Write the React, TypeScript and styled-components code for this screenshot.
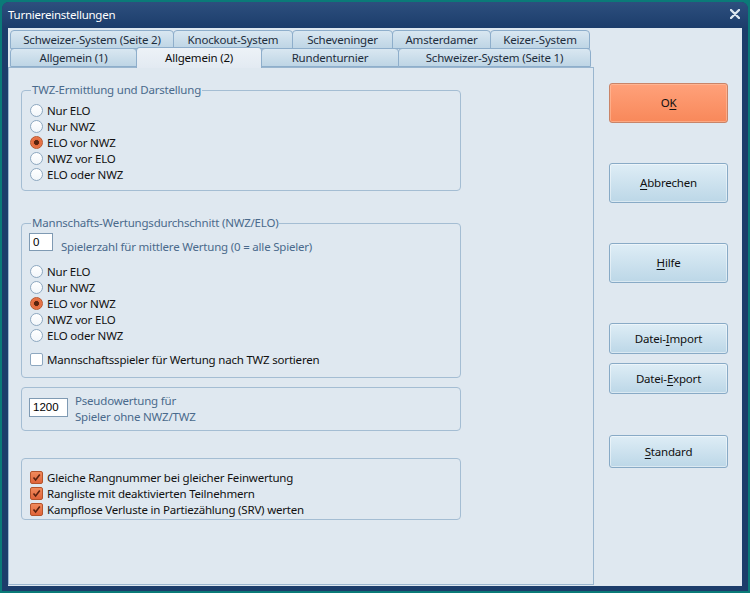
import React from "react";
import styled, { createGlobalStyle } from "styled-components";

const Global = createGlobalStyle`
  html, body { margin: 0; padding: 0; background: #0b7a78; }
  body {
    width: 750px; height: 593px; overflow: hidden;
    font-family: "Noto Sans", "Open Sans", sans-serif;
    font-size: 11.5px;
    letter-spacing: -0.2px;
  }
  * { box-sizing: border-box; }
`;

const Window = styled.div`
  margin: 2px 2px 0 2px;
  width: 746px;
  height: 589px;
  background: #1c3d6b;
  border-radius: 7px 7px 0 0;
  display: flex;
  flex-direction: column;
`;

const TitleBar = styled.div`
  height: 26px;
  display: flex;
  align-items: center;
  justify-content: space-between;
  padding: 0 8px 2px 6px;
  border-radius: 7px 7px 0 0;
  background: linear-gradient(#2d4f7e, #1c3d6b);
  color: #ffffff;
`;

const Title = styled.span`
  font-size: 11.5px;
  letter-spacing: -0.25px;
`;

const Client = styled.div`
  flex: 1;
  margin: 0 6px 5px 6px;
  background: #dfe8f0;
  display: flex;
`;

const TabArea = styled.div`
  width: 586px;
  padding-top: 3px;
  display: flex;
  flex-direction: column;
`;

const TabRow = styled.div`
  display: flex;
  height: 18px;
  margin-left: 2px;
  align-items: flex-end;
`;

const Tab = styled.div<{ $w: number; $active?: boolean }>`
  width: ${(p) => p.$w}px;
  height: ${(p) => (p.$active ? 21 : 19)}px;
  margin-bottom: ${(p) => (p.$active ? -1 : 0)}px;
  margin-right: -1px;
  position: relative;
  z-index: ${(p) => (p.$active ? 2 : 1)};
  border: 1px solid #8eaecb;
  border-bottom: ${(p) => (p.$active ? "none" : "1px solid #8eaecb")};
  border-radius: 4px 4px 0 0;
  background: ${(p) =>
    p.$active ? "linear-gradient(#edf2f7, #e3eaf2)" : "linear-gradient(#d9e7f1, #bed5e5)"};
  display: flex;
  align-items: center;
  justify-content: center;
  padding-bottom: ${(p) => (p.$active ? 2 : 0)}px;
  white-space: nowrap;
`;

const TabText = styled.span<{ $active?: boolean }>`
  color: ${(p) => (p.$active ? "#0c0c0c" : "#1e2d3c")};
`;

const Panel = styled.div`
  position: relative;
  z-index: 1;
  height: 518px;
  border: 1px solid #9ab6cf;
  background: #dfe8f0;
  padding: 0 0 0 12px;
  display: flex;
  flex-direction: column;
`;

const Group = styled.div<{ $mt: number; $h: number; $pt: number }>`
  position: relative;
  width: 440px;
  height: ${(p) => p.$h}px;
  margin-top: ${(p) => p.$mt}px;
  border: 1px solid #a4bdd3;
  border-radius: 4px;
  padding: ${(p) => p.$pt}px 0 0 7px;
  display: flex;
  flex-direction: column;
  flex-shrink: 0;
`;

const Legend = styled.span`
  position: absolute;
  top: -9px;
  left: 9px;
  padding: 0 1px;
  background: #dfe8f0;
  color: #4a6a8c;
  line-height: 16px;
`;

const OptRow = styled.label`
  height: 16px;
  display: flex;
  align-items: center;
  gap: 4px;
  color: #111111;
  white-space: nowrap;
  flex-shrink: 0;
`;

const Radio = styled.span<{ $on?: boolean }>`
  width: 13px;
  height: 13px;
  margin-left: 1px;
  border-radius: 50%;
  border: 1px solid ${(p) => (p.$on ? "#b8552c" : "#8ea8c0")};
  background: ${(p) =>
    p.$on
      ? "radial-gradient(circle, #5a2410 0 2.2px, #e2683c 2.8px, #f0875a 100%)"
      : "linear-gradient(#ffffff, #f2f6fa)"};
  flex-shrink: 0;
`;

const Check = styled.span<{ $on?: boolean }>`
  width: 13px;
  height: 13px;
  margin-left: 1px;
  border-radius: 2px;
  border: 1px solid ${(p) => (p.$on ? "#b4532b" : "#8ea8c0")};
  background: ${(p) => (p.$on ? "linear-gradient(#f08a5c, #e0643a)" : "#ffffff")};
  display: flex;
  align-items: center;
  justify-content: center;
  flex-shrink: 0;
`;

const Input = styled.div<{ $w: number; $h: number; $mt?: number }>`
  width: ${(p) => p.$w}px;
  height: ${(p) => p.$h}px;
  margin-top: ${(p) => p.$mt ?? 0}px;
  border: 1px solid #7f9ab3;
  background: #ffffff;
  color: #000000;
  font-family: "Liberation Sans", Arial, sans-serif;
  font-size: 11.5px;
  letter-spacing: 0;
  padding: 1px 0 0 3px;
  line-height: 14px;
  flex-shrink: 0;
`;

const InlineRow = styled.div<{ $gap: number; $h: number }>`
  display: flex;
  align-items: flex-start;
  gap: ${(p) => p.$gap}px;
  height: ${(p) => p.$h}px;
  flex-shrink: 0;
`;

const Hint = styled.div<{ $mt: number }>`
  color: #4a6a8c;
  margin-top: ${(p) => p.$mt}px;
  line-height: 16px;
  white-space: nowrap;
`;

const Spacer = styled.div<{ $h: number }>`
  height: ${(p) => p.$h}px;
  flex-shrink: 0;
`;

const ButtonColumn = styled.div`
  flex: 1;
  padding: 55px 0 0 15px;
  display: flex;
  flex-direction: column;
  align-items: flex-start;
`;

const Button = styled.div<{ $h: number; $mt: number; $primary?: boolean }>`
  width: 119px;
  height: ${(p) => p.$h}px;
  margin-top: ${(p) => p.$mt}px;
  border: 1px solid ${(p) => (p.$primary ? "#c98468" : "#88aac6")};
  border-radius: 3px;
  background: ${(p) =>
    p.$primary ? "linear-gradient(#ffa17a, #f8885a)" : "linear-gradient(#deedf6, #bcd7e7)"};
  box-shadow: inset 0 0 0 1px ${(p) => (p.$primary ? "rgba(255,200,170,0.5)" : "rgba(255,255,255,0.45)")};
  color: #101010;
  display: flex;
  align-items: center;
  justify-content: center;
  padding-bottom: 1px;
  & u { text-underline-offset: 2px; }
`;

const radioOpts = ["Nur ELO", "Nur NWZ", "ELO vor NWZ", "NWZ vor ELO", "ELO oder NWZ"];

const CheckMark = () => (
  <svg width="9" height="9" viewBox="0 0 9 9">
    <path d="M1.5 4.5 L3.6 7 L7.8 1.5" fill="none" stroke="#5a2210" strokeWidth="1.6" />
  </svg>
);

const RadioList = () => (
  <>
    {radioOpts.map((o, i) => (
      <OptRow key={o}>
        <Radio $on={i === 2} />
        {o}
      </OptRow>
    ))}
  </>
);

export default function App() {
  return (
    <>
      <Global />
      <Window>
        <TitleBar>
          <Title>Turniereinstellungen</Title>
          <svg width="10" height="10" viewBox="0 0 10 10">
            <path d="M1 1 L9 9 M9 1 L1 9" stroke="#dbe6f0" strokeWidth="2.4" strokeLinecap="round" />
          </svg>
        </TitleBar>
        <Client>
          <TabArea>
            <TabRow>
              <Tab $w={164}><TabText>Schweizer-System (Seite 2)</TabText></Tab>
              <Tab $w={120}><TabText>Knockout-System</TabText></Tab>
              <Tab $w={101}><TabText>Scheveninger</TabText></Tab>
              <Tab $w={99}><TabText>Amsterdamer</TabText></Tab>
              <Tab $w={100}><TabText>Keizer-System</TabText></Tab>
            </TabRow>
            <TabRow>
              <Tab $w={127}><TabText>Allgemein (1)</TabText></Tab>
              <Tab $w={126} $active><TabText $active>Allgemein (2)</TabText></Tab>
              <Tab $w={138}><TabText>Rundenturnier</TabText></Tab>
              <Tab $w={193}><TabText>Schweizer-System (Seite 1)</TabText></Tab>
            </TabRow>
            <Panel>
              <Group $mt={22} $h={101} $pt={11}>
                <Legend>TWZ-Ermittlung und Darstellung</Legend>
                <RadioList />
              </Group>
              <Group $mt={32} $h={155} $pt={9}>
                <Legend>Mannschafts-Wertungsdurchschnitt (NWZ/ELO)</Legend>
                <InlineRow $gap={8} $h={18}>
                  <Input $w={24} $h={18}>0</Input>
                  <Hint $mt={6}>Spielerzahl für mittlere Wertung (0 = alle Spieler)</Hint>
                </InlineRow>
                <Spacer $h={12} />
                <RadioList />
                <Spacer $h={8} />
                <OptRow>
                  <Check />
                  Mannschaftsspieler für Wertung nach TWZ sortieren
                </OptRow>
              </Group>
              <Group $mt={9} $h={44} $pt={5}>
                <InlineRow $gap={7} $h={32}>
                  <Input $w={39} $h={19} $mt={5}>1200</Input>
                  <Hint $mt={0}>
                    Pseudowertung für
                    <br />
                    Spieler ohne NWZ/TWZ
                  </Hint>
                </InlineRow>
              </Group>
              <Group $mt={27} $h={62} $pt={10}>
                <OptRow>
                  <Check $on><CheckMark /></Check>
                  Gleiche Rangnummer bei gleicher Feinwertung
                </OptRow>
                <OptRow>
                  <Check $on><CheckMark /></Check>
                  Rangliste mit deaktivierten Teilnehmern
                </OptRow>
                <OptRow>
                  <Check $on><CheckMark /></Check>
                  Kampflose Verluste in Partiezählung (SRV) werten
                </OptRow>
              </Group>
            </Panel>
          </TabArea>
          <ButtonColumn>
            <Button $primary $h={40} $mt={0}>O<u>K</u></Button>
            <Button $h={40} $mt={40}><u>A</u>bbrechen</Button>
            <Button $h={40} $mt={40}><u>H</u>ilfe</Button>
            <Button $h={31} $mt={40}>Datei-<u>I</u>mport</Button>
            <Button $h={31} $mt={9}>Datei-<u>E</u>xport</Button>
            <Button $h={33} $mt={41}><u>S</u>tandard</Button>
          </ButtonColumn>
        </Client>
      </Window>
    </>
  );
}
